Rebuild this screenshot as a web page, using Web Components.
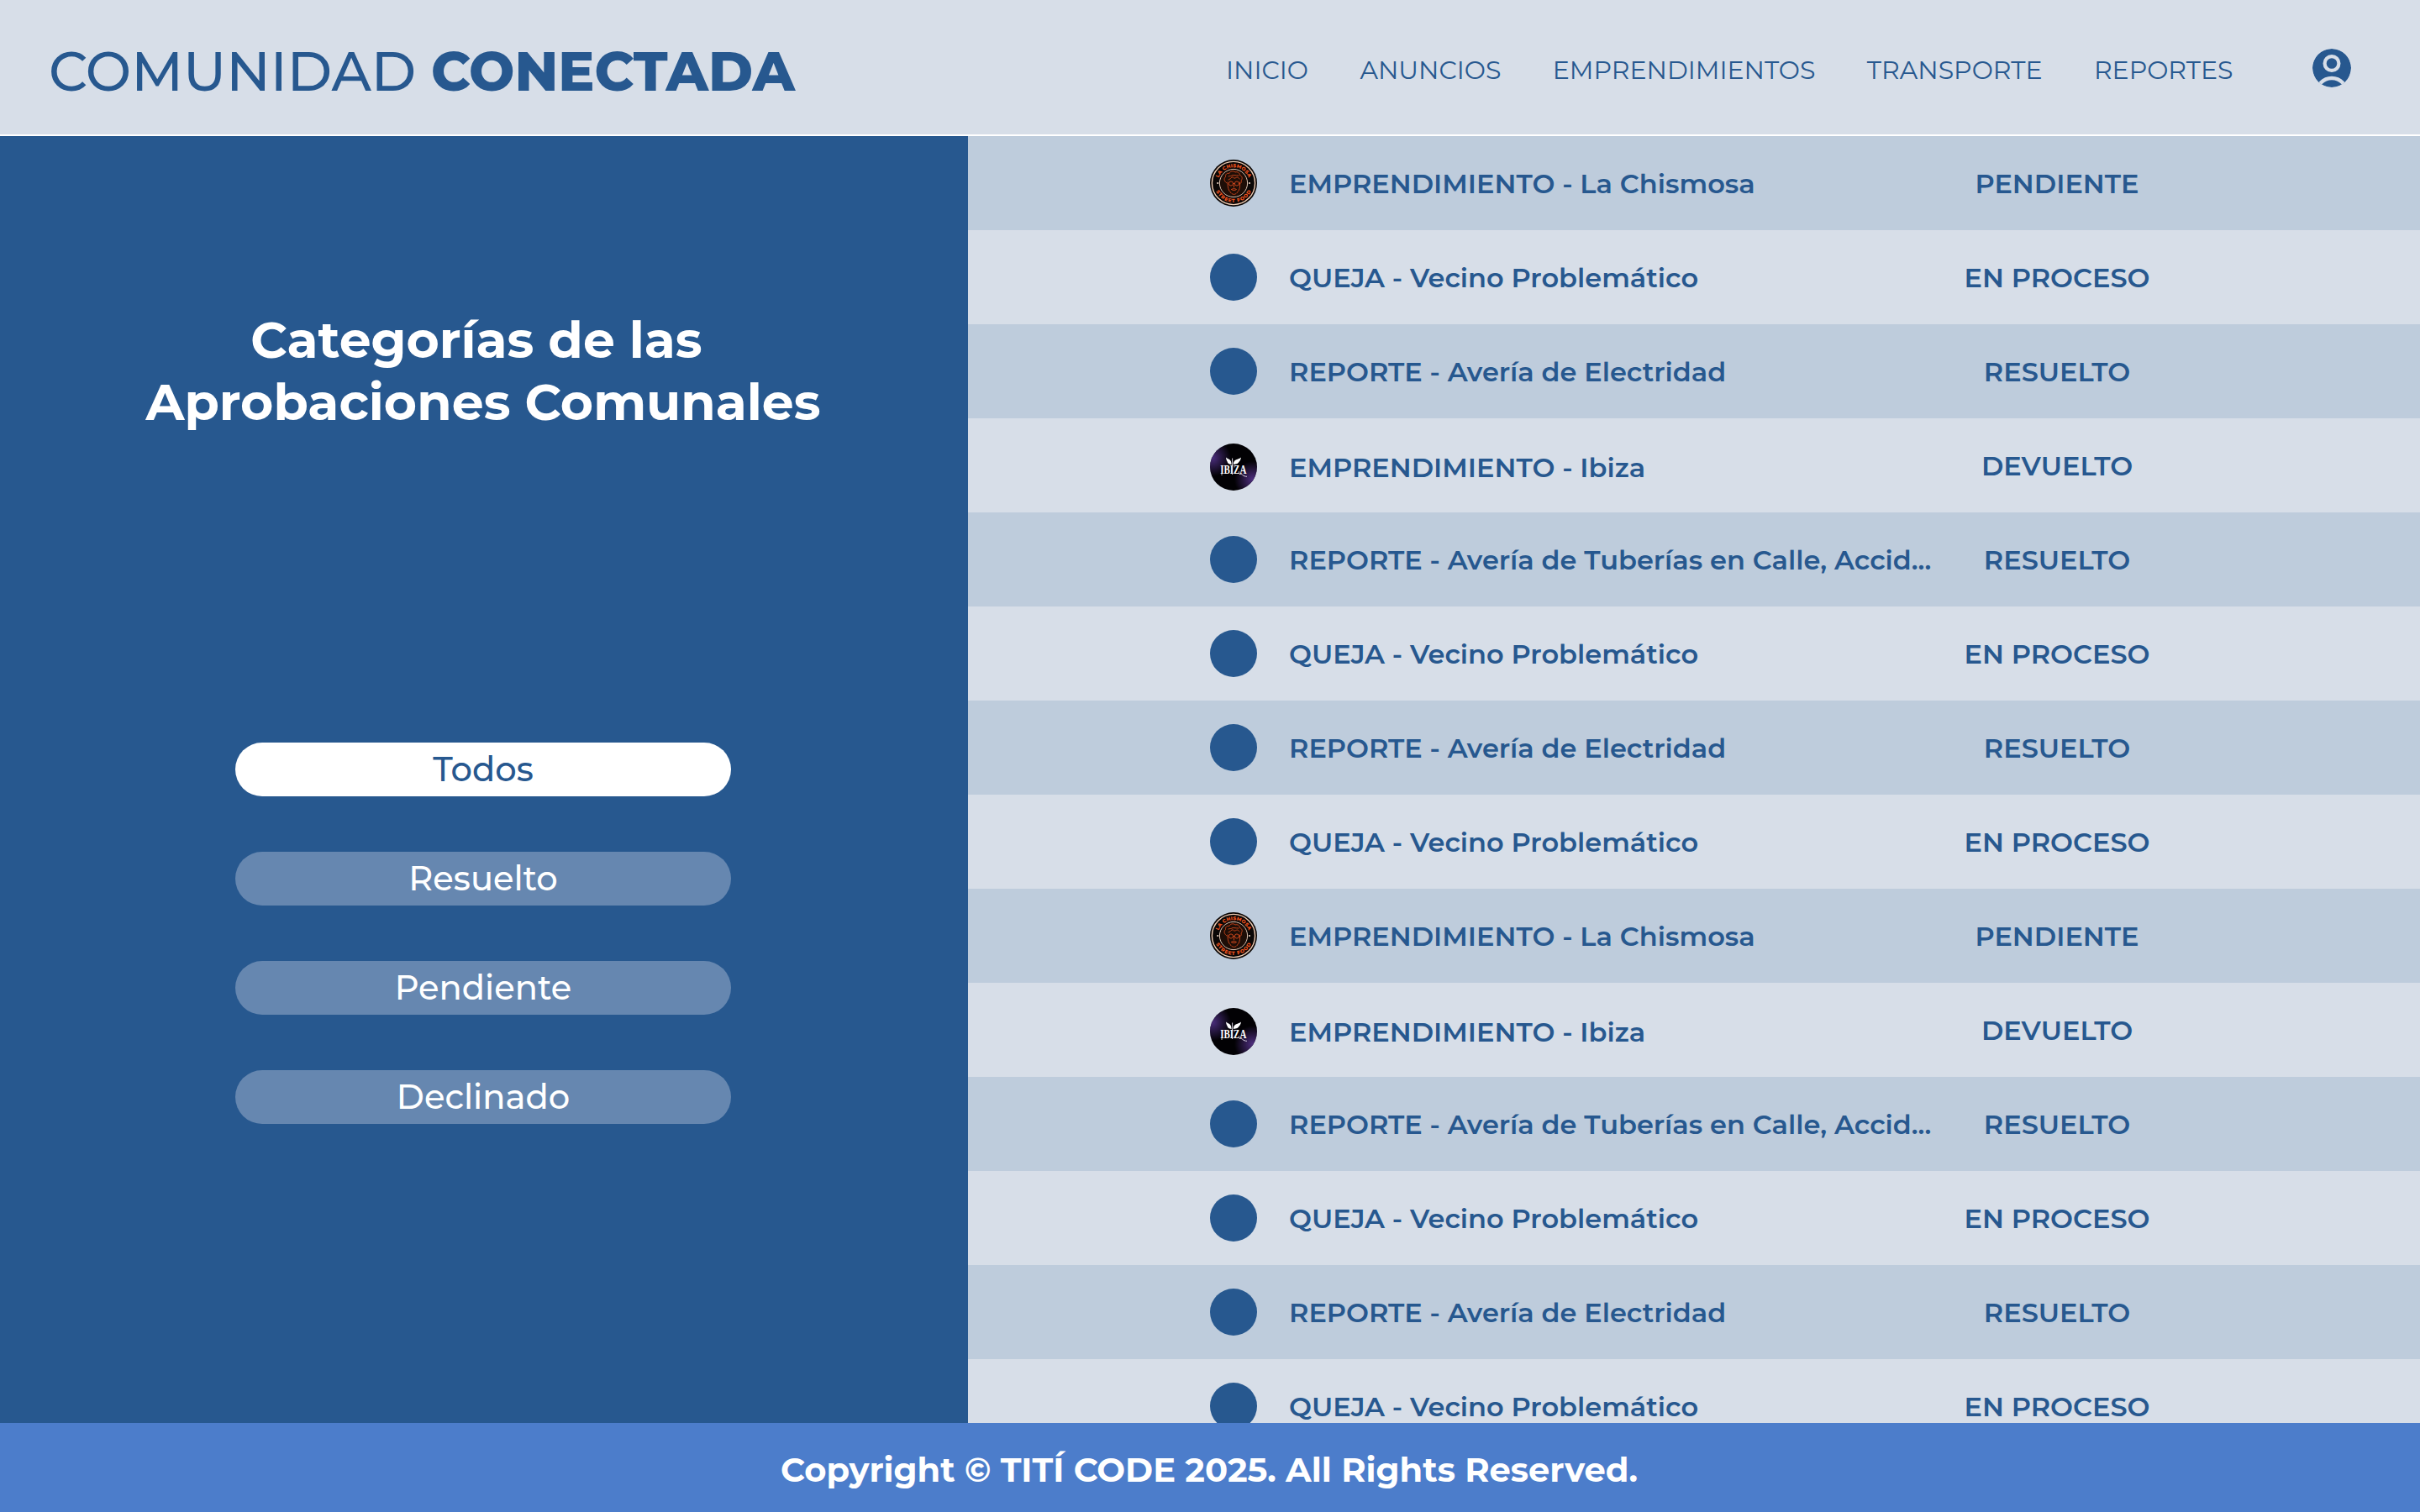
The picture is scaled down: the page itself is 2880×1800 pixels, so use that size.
<!DOCTYPE html>
<html lang="es">
<head>
<meta charset="utf-8">
<title>Comunidad Conectada</title>
<style>
  html, body { margin: 0; height: 100%; }
  body { font-family: Montserrat, Inter, sans-serif; overflow: hidden; }
</style>
</head>
<body>
<community-app></community-app>
<script>
const css = {
  blue: '#27588f', light: '#d7dee8', stripe: '#beccdc', footer: '#4c7dcb', pill: '#6687b0'
};
const define = (name, html, setup) => {
  const tpl = document.createElement('template');
  tpl.innerHTML = html;
  customElements.define(name, class extends HTMLElement {
    connectedCallback() {
      if (this.shadowRoot) return;
      this.attachShadow({ mode: 'open' }).append(tpl.content.cloneNode(true));
      if (setup) setup(this, this.shadowRoot);
    }
  });
};

define('user-icon', `
  <style>:host { display: block; width: 46px; height: 46px; flex: none; } svg { display: block; }</style>
  <svg width="46" height="46" viewBox="0 0 46 46">
    <defs><clipPath id="c"><circle cx="23" cy="23" r="23"/></clipPath></defs>
    <g clip-path="url(#c)">
      <circle cx="23" cy="23" r="23" fill="${css.blue}"/>
      <circle cx="23" cy="17.5" r="8.4" fill="none" stroke="${css.light}" stroke-width="4.2"/>
      <circle cx="23" cy="53.5" r="18.4" fill="none" stroke="${css.light}" stroke-width="4.5"/>
    </g>
  </svg>`);

define('nav-link', `
  <style>:host { display: block; font-size: 30px; line-height: 37px; font-weight: 400; white-space: nowrap; }</style>
  <slot></slot>`);

define('site-header', `
  <style>
    :host { display: flex; box-sizing: border-box; height: 162px; background: ${css.light};
      border-bottom: 2px solid #fff; color: ${css.blue}; padding: 0 82px 0 58px;
      justify-content: space-between; align-items: flex-start; }
    .brand { display: flex; gap: 17.6px; padding-top: 46px; font-size: 64.7px; line-height: 78px; font-weight: 500; }
    .brand b { font-weight: 800; font-size: 64.3px; }
    nav { display: flex; align-items: flex-start; }
    .links { display: flex; gap: 61.4px; padding-top: 65px; }
    user-icon { margin: 58px 0 0 94.500px; }
  </style>
  <div class="brand"><span>COMUNIDAD</span><b>CONECTADA</b></div>
  <nav>
    <div class="links">
      <nav-link>INICIO</nav-link><nav-link>ANUNCIOS</nav-link><nav-link>EMPRENDIMIENTOS</nav-link><nav-link>TRANSPORTE</nav-link><nav-link>REPORTES</nav-link>
    </div>
    <user-icon></user-icon>
  </nav>`);

define('filter-pill', `
  <style>
    :host { display: block; box-sizing: border-box; width: 590px; height: 64px; border-radius: 32px;
      padding-top: 7px; text-align: center; font-size: 40px; line-height: 49px; font-weight: 500;
      background: ${css.pill}; color: #fff; }
    :host([active]) { background: #fff; color: ${css.blue}; }
  </style><slot></slot>`);

define('category-panel', `
  <style>
    :host { display: flex; flex-direction: column; align-items: center; flex: 0 0 1152px;
      box-sizing: border-box; padding: 206px 2px 0 0; background: ${css.blue}; color: #fff; }
    h1 { margin: 0; font-size: 60px; line-height: 74px; font-weight: 700; text-align: center; white-space: nowrap; }
    h1 span { display: block; }
    h1 span:first-child { padding-right: 16px; }
    .filters { display: flex; flex-direction: column; gap: 66px; margin-top: 368px; }
  </style>
  <h1><span>Categorías de las</span><span>Aprobaciones Comunales</span></h1>
  <div class="filters">
    <filter-pill active>Todos</filter-pill>
    <filter-pill>Resuelto</filter-pill>
    <filter-pill>Pendiente</filter-pill>
    <filter-pill>Declinado</filter-pill>
  </div>`);

define('plain-avatar', `
  <style>:host { display: block; flex: none; width: 56px; height: 56px; border-radius: 50%; background: ${css.blue}; }</style>`);

define('chismosa-avatar', `
  <style>:host { display: block; flex: none; width: 56px; height: 56px; } svg { display: block; }</style>
  <svg width="56" height="56" viewBox="0 0 56 56">
    <defs>
      <path id="top" d="M9.300 28a18.700 18.700 0 0 1 37.400 0"/>
      <path id="bot" d="M5 28a23 23 0 0 0 46 0"/>
    </defs>
    <circle cx="28" cy="28" r="28" fill="#0b0706"/>
    <circle cx="28" cy="28" r="25.600" fill="none" stroke="#f0cdb4" stroke-width="1.400"/>
    <circle cx="28" cy="28" r="16.600" fill="#1e0e07" stroke="#dcc4b2" stroke-width="1"/>
    <g fill="#f0541f" font-family="Montserrat, sans-serif" font-weight="800" font-size="6">
      <text text-anchor="middle"><textPath href="#top" startOffset="50%" textLength="46">LA CHISMOSA</textPath></text>
      <text text-anchor="middle"><textPath href="#bot" startOffset="50%" textLength="52">STREET FOOD</textPath></text>
    </g>
    <circle cx="9.200" cy="28" r="1.100" fill="#f0d8c6"/><circle cx="47" cy="28" r="1.100" fill="#f0d8c6"/>
    <g fill="none" stroke="#d2481d" stroke-width=".9" stroke-linecap="round" stroke-linejoin="round">
      <path d="M20 28c-3-2-4-5-1.500-7.500-.5-3 2-5 4.500-4 1-3 5-3.500 7-1.500 3-1 5.500 1 5.500 3.500 3 1 3.500 4.500 1.500 6.500 1 2-.5 3.500-1.500 4"/>
      <path d="M21 27c0 6 1 10 4 12.500 2 2.500 5 2.500 7 0 3-2.500 4-6.500 3.500-12.500"/>
      <path d="M22 24c2 0 2-2 4-3s2 2 4 1 3-2 5 1M22 20c2-1 3 0 4-1s4 0 8 0"/>
      <circle cx="25" cy="28.500" r="2.600"/><circle cx="32" cy="28.500" r="2.600"/>
      <path d="M27.600 28.500h1.800M28.500 30v3M25.500 35.500c2-1.200 4-1.200 6 0-2 1.500-4 1.500-6 0"/>
    </g>
  </svg>`);

define('ibiza-avatar', `
  <style>:host { display: block; flex: none; width: 56px; height: 56px; } svg { display: block; }</style>
  <svg width="56" height="56" viewBox="0 0 56 56">
    <defs>
      <radialGradient id="a" gradientUnits="userSpaceOnUse" cx="3" cy="17" r="22"><stop stop-color="#4a2d7c"/><stop offset="1" stop-color="#4a2d7c" stop-opacity="0"/></radialGradient>
      <radialGradient id="b" gradientUnits="userSpaceOnUse" cx="51" cy="43" r="22"><stop stop-color="#4f2f80"/><stop offset="1" stop-color="#4f2f80" stop-opacity="0"/></radialGradient>
    </defs>
    <circle cx="28" cy="28" r="28" fill="#020104"/>
    <circle cx="28" cy="28" r="28" fill="url(#a)"/>
    <circle cx="28" cy="28" r="28" fill="url(#b)"/>
    <g fill="#fff">
      <path d="M25.600 25c-3.600-.5-4.600-1.500-5-3.500-.9-1.400-1.400-3-1.600-5 2.500 2.500 6.500 1.500 6.600 8.500zM27.800 25c.1-7 6-5.500 9.200-8.500-.3 2-.9 3.600-2.200 5-1 2-3 3.200-7 3.500z"/>
      <text x="12.300" y="35.700" font-family="Liberation Serif, serif" font-size="14.500" textLength="31" lengthAdjust="spacingAndGlyphs">IBIZA</text>
      <circle cx="14" cy="37" r=".7"/>
    </g>
    <path d="M26.600 17.500v19.500M35 36.500c4-1 4 3 9 2.800" fill="none" stroke="#e9e2f2" stroke-width=".9"/>
  </svg>`);

define('approval-row', `
  <style>
    :host { display: flex; height: 112px; flex: none; color: ${css.blue};
      font-size: 32px; line-height: 39px; font-weight: 600; white-space: nowrap; }
    .item { display: flex; align-items: flex-start; gap: 38px; width: 864px; padding: 28px 0 0 288px; box-sizing: border-box; }
    .item span { padding-top: 9px; }
    :host([lowered]) .item { padding-top: 30px; }
    .status { width: 864px; padding-top: 37px; text-align: center; }
  </style>
  <div class="item"><slot name="avatar"></slot><span><slot></slot></span></div>
  <div class="status"></div>`, (el, root) => {
  root.querySelector('.status').textContent = el.getAttribute('state');
});

const queja = '<approval-row state="EN PROCESO"><plain-avatar slot="avatar"></plain-avatar>QUEJA - Vecino Problemático</approval-row>';
const electricidad = '<approval-row state="RESUELTO"><plain-avatar slot="avatar"></plain-avatar>REPORTE - Avería de Electridad</approval-row>';
const tuberias = '<approval-row state="RESUELTO"><plain-avatar slot="avatar"></plain-avatar>REPORTE - Avería de Tuberías en Calle, Accid...</approval-row>';
const chismosa = '<approval-row state="PENDIENTE"><chismosa-avatar slot="avatar"></chismosa-avatar>EMPRENDIMIENTO - La Chismosa</approval-row>';
const ibiza = '<approval-row state="DEVUELTO" lowered><ibiza-avatar slot="avatar"></ibiza-avatar>EMPRENDIMIENTO - Ibiza</approval-row>';

define('approval-list', `
  <style>
    :host { display: flex; flex-direction: column; flex: 1; overflow: hidden; background: ${css.light}; }
    approval-row:nth-of-type(odd) { background: ${css.stripe}; }
  </style>
  ${[chismosa, queja, electricidad, ibiza, tuberias, queja, electricidad, queja,
     chismosa, ibiza, tuberias, queja, electricidad, queja].join('')}`);

define('site-footer', `
  <style>
    :host { display: block; box-sizing: border-box; height: 106px; flex: none; text-align: center;
      padding: 31px 2px 0 0; background: ${css.footer}; color: #fff;
      font-size: 40px; line-height: 49px; font-weight: 700; }
  </style>Copyright © TITÍ CODE 2025. All Rights Reserved.`);

define('community-app', `
  <style>
    :host { display: flex; flex-direction: column; height: 1800px; width: 2880px; }
    main { display: flex; flex: 1; min-height: 0; }
    site-header { flex: none; }
  </style>
  <site-header></site-header>
  <main><category-panel></category-panel><approval-list></approval-list></main>
  <site-footer></site-footer>`);
</script>
</body>
</html>
